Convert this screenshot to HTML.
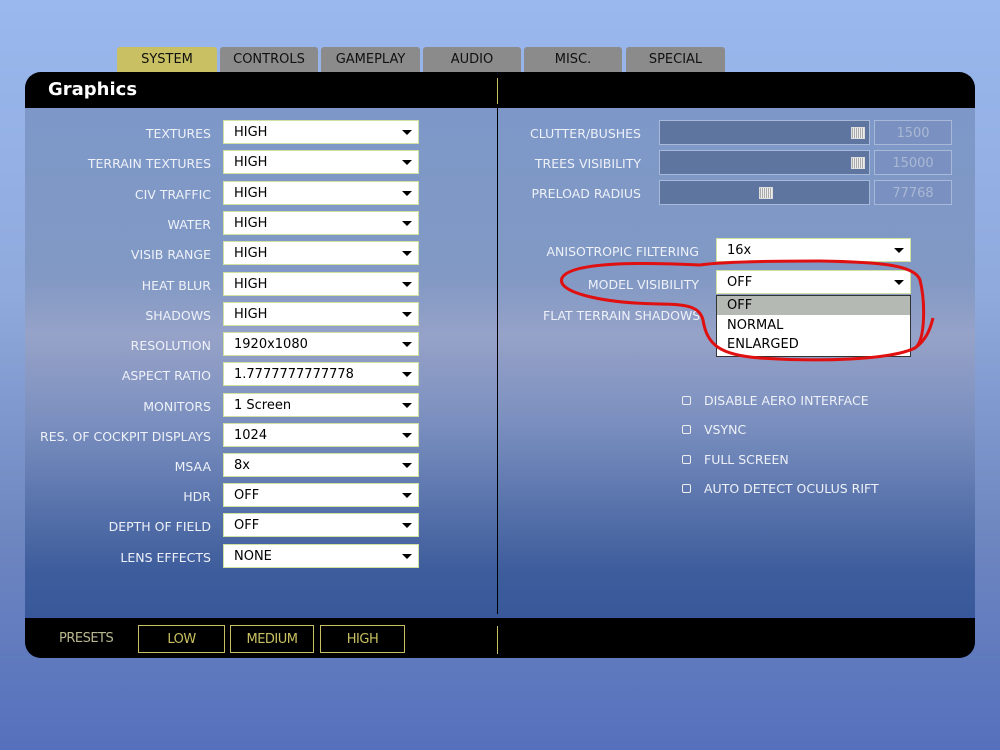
<!DOCTYPE html>
<html><head><meta charset="utf-8"><style>
*{margin:0;padding:0;box-sizing:border-box}
body{width:1000px;height:750px;overflow:hidden;position:relative;font-family:"DejaVu Sans","Liberation Sans",sans-serif;
background:linear-gradient(180deg,#9ab8ee 0%,#8fa9dc 40%,#6f88c0 70%,#5670bd 100%);}
.tab{position:absolute;top:47px;height:25px;background:#8b8b8b;color:#111;font-size:13px;text-align:center;line-height:25px;border-radius:3px 3px 0 0}
.panel{position:absolute;left:25px;top:72px;width:950px;height:586px;border-radius:16px;overflow:hidden;
background:linear-gradient(180deg,#7c97c9 0%,#8199c4 35%,#96a2c8 45%,#7a8fbf 60%,#3e5d9c 85%,#34549a 100%)}
.hdr{position:absolute;left:0;top:0;width:950px;height:36px;background:#000}
.ftr{position:absolute;left:0;top:546px;width:950px;height:40px;background:#000}
.lbl{position:absolute;color:#eef1f8;font-size:12.5px;text-align:right;white-space:nowrap}
.sel{position:absolute;height:24px;background:#fff;border:1px solid #cfe0a0;color:#000;font-size:13px;line-height:24px;padding-left:10px}
.sel:after{content:"";position:absolute;right:6px;top:9px;border-left:5px solid transparent;border-right:5px solid transparent;border-top:5px solid #000}
.sl{position:absolute;left:659px;width:211px;height:25px;background:#5e769f;border:1px solid #a8b8d8}
.sl i{position:absolute;top:6px;width:14px;height:12px;border:1px solid #ddd;background:repeating-linear-gradient(90deg,#aaa 0 1px,#eee 1px 2px)}
.val{position:absolute;left:874px;width:78px;height:25px;border:1px solid #a8b8d8;color:#aab8d4;font-size:13px;line-height:25px;text-align:center;background:#7990c0}
.cb{position:absolute;left:682px;width:9px;height:9px;border:1px solid #eee;border-radius:2px}
.cl{position:absolute;left:704px;color:#eef1f8;font-size:12.5px}
.pb{position:absolute;top:625px;height:28px;border:1px solid #c8c060;color:#c8c060;font-size:13px;text-align:center;line-height:27px;letter-spacing:-0.5px}
</style></head><body>
<div class="tab" style="left:117px;width:100px;background:#c8c063">SYSTEM</div>
<div class="tab" style="left:220px;width:98px">CONTROLS</div>
<div class="tab" style="left:321px;width:99px">GAMEPLAY</div>
<div class="tab" style="left:423px;width:98px">AUDIO</div>
<div class="tab" style="left:524px;width:98px">MISC.</div>
<div class="tab" style="left:626px;width:99px">SPECIAL</div>
<div class="panel">
<div class="hdr"><div style="position:absolute;left:23px;top:7px;color:#fff;font-weight:bold;font-size:18px">Graphics</div><div style="position:absolute;left:472px;top:6px;width:1px;height:26px;background:#c8c060"></div></div>
<div style="position:absolute;left:472px;top:36px;width:1px;height:506px;background:#000"></div>
<div class="ftr"><div style="position:absolute;left:34px;top:13px;color:#b8b890;font-size:13px;letter-spacing:-0.5px">PRESETS</div><div style="position:absolute;left:472px;top:8px;width:1px;height:28px;background:#c8c060"></div></div>
</div>
<div class="pb" style="left:138px;width:87px">LOW</div>
<div class="pb" style="left:230px;width:84px">MEDIUM</div>
<div class="pb" style="left:320px;width:85px">HIGH</div>

<div class="lbl" style="right:789px;top:126px">TEXTURES</div><div class="sel" style="left:223px;top:120px;width:196px">HIGH</div>
<div class="lbl" style="right:789px;top:156px">TERRAIN TEXTURES</div><div class="sel" style="left:223px;top:150px;width:196px">HIGH</div>
<div class="lbl" style="right:789px;top:187px">CIV TRAFFIC</div><div class="sel" style="left:223px;top:181px;width:196px">HIGH</div>
<div class="lbl" style="right:789px;top:217px">WATER</div><div class="sel" style="left:223px;top:211px;width:196px">HIGH</div>
<div class="lbl" style="right:789px;top:247px">VISIB RANGE</div><div class="sel" style="left:223px;top:241px;width:196px">HIGH</div>
<div class="lbl" style="right:789px;top:278px">HEAT BLUR</div><div class="sel" style="left:223px;top:272px;width:196px">HIGH</div>
<div class="lbl" style="right:789px;top:308px">SHADOWS</div><div class="sel" style="left:223px;top:302px;width:196px">HIGH</div>
<div class="lbl" style="right:789px;top:338px">RESOLUTION</div><div class="sel" style="left:223px;top:332px;width:196px">1920x1080</div>
<div class="lbl" style="right:789px;top:368px">ASPECT RATIO</div><div class="sel" style="left:223px;top:362px;width:196px">1.7777777777778</div>
<div class="lbl" style="right:789px;top:399px">MONITORS</div><div class="sel" style="left:223px;top:393px;width:196px">1 Screen</div>
<div class="lbl" style="right:789px;top:429px">RES. OF COCKPIT DISPLAYS</div><div class="sel" style="left:223px;top:423px;width:196px">1024</div>
<div class="lbl" style="right:789px;top:459px">MSAA</div><div class="sel" style="left:223px;top:453px;width:196px">8x</div>
<div class="lbl" style="right:789px;top:489px">HDR</div><div class="sel" style="left:223px;top:483px;width:196px">OFF</div>
<div class="lbl" style="right:789px;top:519px">DEPTH OF FIELD</div><div class="sel" style="left:223px;top:513px;width:196px">OFF</div>
<div class="lbl" style="right:789px;top:550px">LENS EFFECTS</div><div class="sel" style="left:223px;top:544px;width:196px">NONE</div>

<div class="lbl" style="right:359px;top:126px">CLUTTER/BUSHES</div><div class="sl" style="top:120px"><i style="left:191px"></i></div><div class="val" style="top:120px">1500</div>
<div class="lbl" style="right:359px;top:156px">TREES VISIBILITY</div><div class="sl" style="top:150px"><i style="left:191px"></i></div><div class="val" style="top:150px">15000</div>
<div class="lbl" style="right:359px;top:186px">PRELOAD RADIUS</div><div class="sl" style="top:180px"><i style="left:99px"></i></div><div class="val" style="top:180px">77768</div>

<div class="lbl" style="right:301px;top:244px">ANISOTROPIC FILTERING</div><div class="sel" style="left:716px;top:238px;width:195px">16x</div>
<div class="lbl" style="right:301px;top:277px">MODEL VISIBILITY</div><div class="sel" style="left:716px;top:270px;width:195px">OFF</div>
<div class="lbl" style="left:543px;top:308px">FLAT TERRAIN SHADOWS</div>
<div style="position:absolute;left:716px;top:295px;width:195px;height:62px;background:#fff;border:1px solid #333;font-size:13px;color:#000">
<div style="background:#b4b9b4;height:19px;line-height:20px;padding-left:10px">OFF</div>
<div style="height:20px;line-height:21px;padding-left:10px">NORMAL</div>
<div style="height:20px;line-height:20px;padding-left:10px">ENLARGED</div></div>

<div class="cb" style="top:396px"></div><div class="cl" style="top:393px">DISABLE AERO INTERFACE</div>
<div class="cb" style="top:425px"></div><div class="cl" style="top:422px">VSYNC</div>
<div class="cb" style="top:455px"></div><div class="cl" style="top:452px">FULL SCREEN</div>
<div class="cb" style="top:484px"></div><div class="cl" style="top:481px">AUTO DETECT OCULUS RIFT</div>

<svg style="position:absolute;left:0;top:0" width="1000" height="750"><path d="M700 265 C640 262 570 262 562 278 C556 292 600 303 660 304 C690 304 700 308 703 320 C707 345 720 355 760 358 C820 362 890 360 915 348 C926 340 925 300 920 280 C915 265 880 262 820 261 C760 261 720 262 700 265 M933 318 C930 330 926 340 915 348" fill="none" stroke="#e01010" stroke-width="3"/></svg>
</body></html>
